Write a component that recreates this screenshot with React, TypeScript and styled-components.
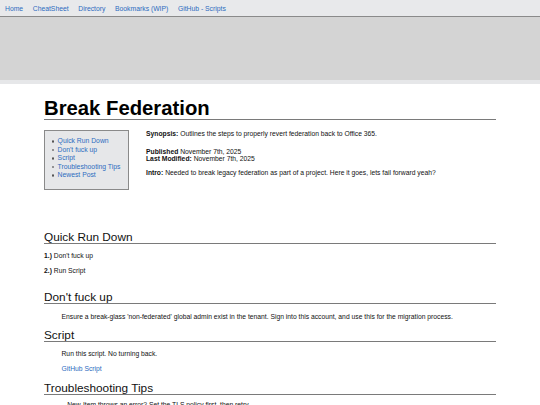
import React from 'react'
import styled, { createGlobalStyle } from 'styled-components'

const GlobalStyle = createGlobalStyle`
  html, body {
    margin: 0;
    padding: 0;
    background: #ffffff;
    font-family: 'Liberation Sans', Arial, sans-serif;
    color: #111;
  }
`

const navLinks = ['Home', 'CheatSheet', 'Directory', 'Bookmarks (WIP)', 'GitHub - Scripts']

const tocLinks = ['Quick Run Down', "Don't fuck up", 'Script', 'Troubleshooting Tips', 'Newest Post']

const App: React.FC = () => {
  return (
    <>
      <GlobalStyle />
      <StyledNav>
        {navLinks.map((link) => (
          <StyledNavLink key={link} href="#">
            {link}
          </StyledNavLink>
        ))}
      </StyledNav>
      <StyledBanner />
      <StyledStrip />
      <StyledMain>
        <StyledTitle>Break Federation</StyledTitle>
        <StyledIntroRow>
          <StyledToc>
            <StyledTocList>
              {tocLinks.map((link) => (
                <StyledTocItem key={link}>
                  <StyledLink href="#">{link}</StyledLink>
                </StyledTocItem>
              ))}
            </StyledTocList>
          </StyledToc>
          <StyledMeta>
            <StyledText>
              <b>Synopsis:</b> Outlines the steps to properly revert federation back to Office 365.
            </StyledText>
            <StyledText $top={10.3}>
              <b>Published</b> November 7th, 2025
              <br />
              <b>Last Modified:</b> November 7th, 2025
            </StyledText>
            <StyledText $top={7.4}>
              <b>Intro:</b> Needed to break legacy federation as part of a project. Here it goes, lets fail forward
              yeah?
            </StyledText>
          </StyledMeta>
        </StyledIntroRow>

        <StyledHeading $top={40.7}>Quick Run Down</StyledHeading>
        <StyledText $top={8.5}>
          <b>1.)</b> Don't fuck up
        </StyledText>
        <StyledText $top={7.2}>
          <b>2.)</b> Run Script
        </StyledText>

        <StyledHeading $top={17}>Don't fuck up</StyledHeading>
        <StyledText $top={9.4} $indent>
          Ensure a break-glass 'non-federated' global admin exist in the tenant. Sign into this account, and use this
          for the migration process.
        </StyledText>

        <StyledHeading $top={8.4}>Script</StyledHeading>
        <StyledText $top={8.4} $indent>
          Run this script. No turning back.
        </StyledText>
        <StyledText $top={7.8} $indent>
          <StyledLink href="#">GitHub Script</StyledLink>
        </StyledText>

        <StyledHeading $top={10}>Troubleshooting Tips</StyledHeading>
        <StyledText $top={5.5} $indent>
          &nbsp;&nbsp;&nbsp;New-Item throws an error? Set the TLS policy first, then retry.
        </StyledText>
      </StyledMain>
    </>
  )
}

const StyledNav = styled.nav`
  display: flex;
  align-items: center;
  gap: 9.6px;
  height: 16px;
  padding: 0 5px;
  background: #e8e9eb;
  border-bottom: 1px solid #8a8a8a;
`

const StyledNavLink = styled.a`
  color: #2d6cc0;
  font-size: 6.8px;
  text-decoration: none;
`

const StyledBanner = styled.div`
  height: 63px;
  background: #d4d4d4;
`

const StyledStrip = styled.div`
  height: 4px;
  background: #e6e7e9;
`

const StyledMain = styled.main`
  width: 452px;
  margin: 0 auto;
`

const StyledTitle = styled.h1`
  margin: 14px 0 0;
  font-size: 20.3px;
  font-weight: 700;
  line-height: 21px;
  color: #000;
  border-bottom: 1px solid #7a7a7a;
`

const StyledIntroRow = styled.div`
  display: flex;
  align-items: flex-start;
  gap: 17px;
  margin-top: 10px;
`

const StyledToc = styled.div`
  box-sizing: border-box;
  width: 85px;
  height: 60px;
  flex-shrink: 0;
  padding: 6px 0 0;
  background: #e6e7e9;
  border: 1px solid #8a8a8a;
`

const StyledTocList = styled.ul`
  margin: 0;
  padding-left: 6.5px;
  list-style: none;
  font-size: 6.8px;
  line-height: 8.6px;
`

const StyledTocItem = styled.li`
  display: flex;
  align-items: center;
  gap: 3.5px;

  &::before {
    content: '';
    box-sizing: border-box;
    width: 2.6px;
    height: 2.6px;
    border: 0.7px solid #555;
    border-radius: 50%;
    flex-shrink: 0;
  }
`

const StyledMeta = styled.div`
  flex: 1;
`

const StyledLink = styled.a`
  color: #2d6cc0;
  text-decoration: none;
`

const StyledHeading = styled.h2<{ $top: number }>`
  margin: ${(props) => props.$top}px 0 0;
  font-size: 11.8px;
  font-weight: 400;
  line-height: 12px;
  color: #111;
  border-bottom: 1px solid #7a7a7a;
`

const StyledText = styled.p<{ $top?: number; $indent?: boolean }>`
  margin: ${(props) => props.$top ?? 0}px 0 0;
  padding-left: ${(props) => (props.$indent ? 17.5 : 0)}px;
  font-size: 6.75px;
  line-height: 7.2px;
  color: #111;

  b {
    font-weight: 700;
  }
`

export default App
